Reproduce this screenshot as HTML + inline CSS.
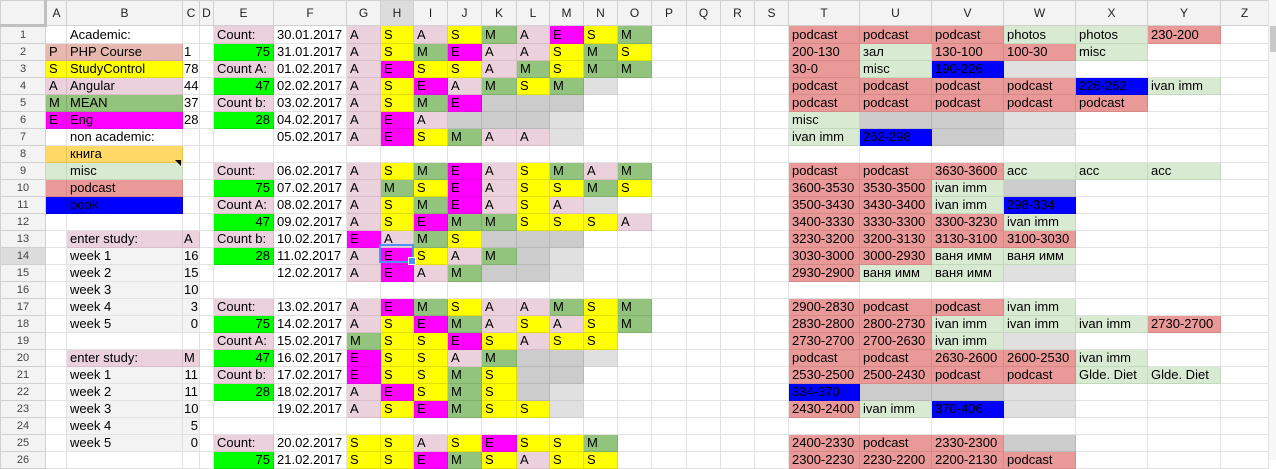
<!DOCTYPE html>
<html><head><meta charset="utf-8">
<style>
html,body{margin:0;padding:0;background:#fff;overflow:hidden;width:1276px;height:460px}
table{border-collapse:collapse;table-layout:fixed;width:1268px;font-family:"Liberation Sans",Arial,sans-serif;font-size:13px;color:#000;position:absolute;left:0;top:0}
td,th{border:1px solid #e2e2e2;padding:0 3px;height:16px;line-height:16px;white-space:nowrap;overflow:hidden;font-weight:normal;text-align:left}
td:nth-child(4){padding:0 1px}
thead th{height:23px;background:#f3f3f3;color:#222;text-align:center;border-color:#d0d0d0;font-size:12px;padding:0}
tbody th{background:#f3f3f3;color:#444;text-align:center;font-size:11px;border-color:#d0d0d0;padding:0}
thead th.c{border-right:3px solid #c0c0c0;border-bottom:3px solid #c0c0c0}
.n{text-align:right}
.p{background:#ead1dc;border-color:#d8bcc8}
.y{background:#ffff00;border-color:#e0e000}
.g{background:#93c47d;border-color:#80b06a}
.m{background:#ff00ff;border-color:#e000e0}
.G{background:#00ff00;border-color:#00dd00}
.r{background:#ea9999;border-color:#d88888}
.l{background:#d9ead3;border-color:#c4d8bd}
.b{background:#0000ff;border-color:#0000dd}
.o{background:#ffd966;border-color:#e8c255}
.s{background:#e6b8af;border-color:#d4a49b}
.k{background:#cccccc;border-color:#b8b8b8}
.e{background:#e0e0e0;border-color:#cfcfcf}
.f{background:#f3f3f3}
.sel{position:absolute;left:379px;top:244px;width:31px;height:15px;border:2px solid #4d90fe}
.hd{position:absolute;left:408px;top:257px;width:6px;height:6px;background:#4d90fe;border:1px solid #fff}
.sb{position:absolute;left:1268px;top:0;width:8px;height:460px;background:#f7f7f7;border-left:1px solid #e2e2e2}
.th{position:absolute;left:1270px;top:26px;width:6px;height:26px;background:#c8c8c8}
.tri{position:absolute;left:175px;top:160px;width:0;height:0;border-left:6px solid transparent;border-top:6px solid #000}
</style></head><body>
<table>
<colgroup><col style="width:45px"><col style="width:21px"><col style="width:116px"><col style="width:17px"><col style="width:14px"><col style="width:60px"><col style="width:73px"><col style="width:34px"><col style="width:33px"><col style="width:34px"><col style="width:34px"><col style="width:35px"><col style="width:33px"><col style="width:34px"><col style="width:34px"><col style="width:34px"><col style="width:35px"><col style="width:34px"><col style="width:34px"><col style="width:34px"><col style="width:71px"><col style="width:72px"><col style="width:72px"><col style="width:72px"><col style="width:72px"><col style="width:73px"><col style="width:48px"></colgroup>
<thead><tr><th class="c"></th><th>A</th><th>B</th><th>C</th><th>D</th><th>E</th><th>F</th><th>G</th><th style="background:#dcdcdc">H</th><th>I</th><th>J</th><th>K</th><th>L</th><th>M</th><th>N</th><th>O</th><th>P</th><th>Q</th><th>R</th><th>S</th><th>T</th><th>U</th><th>V</th><th>W</th><th>X</th><th>Y</th><th>Z</th></tr></thead>
<tbody>
<tr><th>1</th><td></td><td>Academic:</td><td></td><td></td><td class="p">Count:</td><td>30.01.2017</td><td class="p">A</td><td class="y">S</td><td class="p">A</td><td class="y">S</td><td class="g">M</td><td class="p">A</td><td class="m">E</td><td class="y">S</td><td class="g">M</td><td></td><td></td><td></td><td></td><td class="r">podcast</td><td class="r">podcast</td><td class="r">podcast</td><td class="l">photos</td><td class="l">photos</td><td class="r">230-200</td><td></td></tr>
<tr><th>2</th><td class="s">P</td><td class="s">PHP Course</td><td>1</td><td></td><td class="G n">75</td><td>31.01.2017</td><td class="p">A</td><td class="y">S</td><td class="g">M</td><td class="m">E</td><td class="p">A</td><td class="p">A</td><td class="y">S</td><td class="g">M</td><td class="y">S</td><td></td><td></td><td></td><td></td><td class="r">200-130</td><td class="l">зал</td><td class="r">130-100</td><td class="r">100-30</td><td class="l">misc</td><td></td><td></td></tr>
<tr><th>3</th><td class="y">S</td><td class="y">StudyControl</td><td>78</td><td></td><td class="p">Count A:</td><td>01.02.2017</td><td class="p">A</td><td class="m">E</td><td class="y">S</td><td class="y">S</td><td class="p">A</td><td class="g">M</td><td class="y">S</td><td class="g">M</td><td class="g">M</td><td></td><td></td><td></td><td></td><td class="r">30-0</td><td class="l">misc</td><td class="b">190-226</td><td class="e"></td><td></td><td></td><td></td></tr>
<tr><th>4</th><td class="p">A</td><td class="p">Angular</td><td>44</td><td></td><td class="G n">47</td><td>02.02.2017</td><td class="p">A</td><td class="y">S</td><td class="m">E</td><td class="p">A</td><td class="g">M</td><td class="y">S</td><td class="g">M</td><td class="e"></td><td></td><td></td><td></td><td></td><td></td><td class="r">podcast</td><td class="r">podcast</td><td class="r">podcast</td><td class="r">podcast</td><td class="b">226-262</td><td class="l">ivan imm</td><td></td></tr>
<tr><th>5</th><td class="g">M</td><td class="g">MEAN</td><td>37</td><td></td><td class="p">Count b:</td><td>03.02.2017</td><td class="p">A</td><td class="y">S</td><td class="g">M</td><td class="m">E</td><td class="k"></td><td class="k"></td><td class="k"></td><td></td><td></td><td></td><td></td><td></td><td></td><td class="r">podcast</td><td class="r">podcast</td><td class="r">podcast</td><td class="r">podcast</td><td class="r">podcast</td><td></td><td></td></tr>
<tr><th>6</th><td class="m">E</td><td class="m">Eng</td><td>28</td><td></td><td class="G n">28</td><td>04.02.2017</td><td class="p">A</td><td class="m">E</td><td class="p">A</td><td class="k"></td><td class="k"></td><td class="k"></td><td class="e"></td><td></td><td></td><td></td><td></td><td></td><td></td><td class="l">misc</td><td class="k"></td><td class="k"></td><td class="e"></td><td></td><td></td><td></td></tr>
<tr><th>7</th><td></td><td>non academic:</td><td></td><td></td><td></td><td>05.02.2017</td><td class="p">A</td><td class="m">E</td><td class="y">S</td><td class="g">M</td><td class="p">A</td><td class="p">A</td><td class="e"></td><td></td><td></td><td></td><td></td><td></td><td></td><td class="l">ivan imm</td><td class="b">262-298</td><td class="k"></td><td class="e"></td><td></td><td></td><td></td></tr>
<tr><th>8</th><td class="o"></td><td class="o">книга</td><td></td><td></td><td></td><td></td><td></td><td></td><td></td><td></td><td></td><td></td><td></td><td></td><td></td><td></td><td></td><td></td><td></td><td></td><td></td><td></td><td></td><td></td><td></td><td></td></tr>
<tr><th>9</th><td class="l"></td><td class="l">misc</td><td></td><td></td><td class="p">Count:</td><td>06.02.2017</td><td class="p">A</td><td class="y">S</td><td class="g">M</td><td class="m">E</td><td class="p">A</td><td class="y">S</td><td class="g">M</td><td class="p">A</td><td class="g">M</td><td></td><td></td><td></td><td></td><td class="r">podcast</td><td class="r">podcast</td><td class="r">3630-3600</td><td class="l">acc</td><td class="l">acc</td><td class="l">acc</td><td></td></tr>
<tr><th>10</th><td class="r"></td><td class="r">podcast</td><td></td><td></td><td class="G n">75</td><td>07.02.2017</td><td class="p">A</td><td class="g">M</td><td class="y">S</td><td class="m">E</td><td class="p">A</td><td class="y">S</td><td class="y">S</td><td class="g">M</td><td class="y">S</td><td></td><td></td><td></td><td></td><td class="r">3600-3530</td><td class="r">3530-3500</td><td class="l">ivan imm</td><td class="k"></td><td></td><td></td><td></td></tr>
<tr><th>11</th><td class="b"></td><td class="b">book</td><td></td><td></td><td class="p">Count A:</td><td>08.02.2017</td><td class="p">A</td><td class="y">S</td><td class="g">M</td><td class="m">E</td><td class="p">A</td><td class="y">S</td><td class="p">A</td><td class="e"></td><td></td><td></td><td></td><td></td><td></td><td class="r">3500-3430</td><td class="r">3430-3400</td><td class="l">ivan imm</td><td class="b">298-334</td><td></td><td></td><td></td></tr>
<tr><th>12</th><td></td><td></td><td></td><td></td><td class="G n">47</td><td>09.02.2017</td><td class="p">A</td><td class="y">S</td><td class="m">E</td><td class="g">M</td><td class="g">M</td><td class="y">S</td><td class="y">S</td><td class="y">S</td><td class="p">A</td><td></td><td></td><td></td><td></td><td class="r">3400-3330</td><td class="r">3330-3300</td><td class="r">3300-3230</td><td class="l">ivan imm</td><td></td><td></td><td></td></tr>
<tr><th>13</th><td></td><td class="p">enter study:</td><td class="p">A</td><td></td><td class="p">Count b:</td><td>10.02.2017</td><td class="m">E</td><td class="p">A</td><td class="g">M</td><td class="y">S</td><td class="k"></td><td class="k"></td><td class="k"></td><td></td><td></td><td></td><td></td><td></td><td></td><td class="r">3230-3200</td><td class="r">3200-3130</td><td class="r">3130-3100</td><td class="r">3100-3030</td><td></td><td></td><td></td></tr>
<tr><th style="background:#dcdcdc">14</th><td></td><td class="f">week 1</td><td class="f">16</td><td></td><td class="G n">28</td><td>11.02.2017</td><td class="p">A</td><td class="m">E</td><td class="y">S</td><td class="p">A</td><td class="g">M</td><td class="k"></td><td class="e"></td><td></td><td></td><td></td><td></td><td></td><td></td><td class="r">3030-3000</td><td class="r">3000-2930</td><td class="l">ваня имм</td><td class="l">ваня имм</td><td></td><td></td><td></td></tr>
<tr><th>15</th><td></td><td class="f">week 2</td><td class="f">15</td><td></td><td></td><td>12.02.2017</td><td class="p">A</td><td class="m">E</td><td class="p">A</td><td class="g">M</td><td class="k"></td><td class="k"></td><td class="e"></td><td></td><td></td><td></td><td></td><td></td><td></td><td class="r">2930-2900</td><td class="l">ваня имм</td><td class="l">ваня имм</td><td class="e"></td><td></td><td></td><td></td></tr>
<tr><th>16</th><td></td><td class="f">week 3</td><td class="f">10</td><td></td><td></td><td></td><td></td><td></td><td></td><td></td><td></td><td></td><td></td><td></td><td></td><td></td><td></td><td></td><td></td><td></td><td></td><td></td><td></td><td></td><td></td><td></td></tr>
<tr><th>17</th><td></td><td class="f">week 4</td><td class="f n">3</td><td></td><td class="p">Count:</td><td>13.02.2017</td><td class="p">A</td><td class="m">E</td><td class="g">M</td><td class="y">S</td><td class="p">A</td><td class="p">A</td><td class="g">M</td><td class="y">S</td><td class="g">M</td><td></td><td></td><td></td><td></td><td class="r">2900-2830</td><td class="r">podcast</td><td class="r">podcast</td><td class="l">ivan imm</td><td></td><td></td><td></td></tr>
<tr><th>18</th><td></td><td class="f">week 5</td><td class="f n">0</td><td></td><td class="G n">75</td><td>14.02.2017</td><td class="p">A</td><td class="y">S</td><td class="m">E</td><td class="g">M</td><td class="p">A</td><td class="y">S</td><td class="p">A</td><td class="y">S</td><td class="g">M</td><td></td><td></td><td></td><td></td><td class="r">2830-2800</td><td class="r">2800-2730</td><td class="l">ivan imm</td><td class="l">ivan imm</td><td class="l">ivan imm</td><td class="r">2730-2700</td><td></td></tr>
<tr><th>19</th><td></td><td></td><td></td><td></td><td class="p">Count A:</td><td>15.02.2017</td><td class="g">M</td><td class="y">S</td><td class="y">S</td><td class="m">E</td><td class="y">S</td><td class="p">A</td><td class="y">S</td><td class="y">S</td><td></td><td></td><td></td><td></td><td></td><td class="r">2730-2700</td><td class="r">2700-2630</td><td class="l">ivan imm</td><td class="e"></td><td></td><td></td><td></td></tr>
<tr><th>20</th><td></td><td class="p">enter study:</td><td class="p">M</td><td></td><td class="G n">47</td><td>16.02.2017</td><td class="m">E</td><td class="y">S</td><td class="y">S</td><td class="p">A</td><td class="g">M</td><td class="k"></td><td class="k"></td><td class="e"></td><td></td><td></td><td></td><td></td><td></td><td class="r">podcast</td><td class="r">podcast</td><td class="r">2630-2600</td><td class="r">2600-2530</td><td class="l">ivan imm</td><td></td><td></td></tr>
<tr><th>21</th><td></td><td class="f">week 1</td><td class="f n">11</td><td></td><td class="p">Count b:</td><td>17.02.2017</td><td class="m">E</td><td class="y">S</td><td class="y">S</td><td class="g">M</td><td class="y">S</td><td class="k"></td><td class="k"></td><td></td><td></td><td></td><td></td><td></td><td></td><td class="r">2530-2500</td><td class="r">2500-2430</td><td class="r">podcast</td><td class="r">podcast</td><td class="l">Glde. Diet</td><td class="l">Glde. Diet</td><td></td></tr>
<tr><th>22</th><td></td><td class="f">week 2</td><td class="f n">11</td><td></td><td class="G n">28</td><td>18.02.2017</td><td class="p">A</td><td class="m">E</td><td class="y">S</td><td class="g">M</td><td class="y">S</td><td class="k"></td><td class="e"></td><td></td><td></td><td></td><td></td><td></td><td></td><td class="b">334-370</td><td class="k"></td><td class="k"></td><td class="e"></td><td></td><td></td><td></td></tr>
<tr><th>23</th><td></td><td class="f">week 3</td><td class="f n">10</td><td></td><td></td><td>19.02.2017</td><td class="p">A</td><td class="y">S</td><td class="m">E</td><td class="g">M</td><td class="y">S</td><td class="y">S</td><td class="e"></td><td></td><td></td><td></td><td></td><td></td><td></td><td class="r">2430-2400</td><td class="l">ivan imm</td><td class="b">370-406</td><td class="e"></td><td></td><td></td><td></td></tr>
<tr><th>24</th><td></td><td class="f">week 4</td><td class="f n">5</td><td></td><td></td><td></td><td></td><td></td><td></td><td></td><td></td><td></td><td></td><td></td><td></td><td></td><td></td><td></td><td></td><td></td><td></td><td></td><td></td><td></td><td></td><td></td></tr>
<tr><th>25</th><td></td><td class="f">week 5</td><td class="f n">0</td><td></td><td class="p">Count:</td><td>20.02.2017</td><td class="y">S</td><td class="y">S</td><td class="p">A</td><td class="y">S</td><td class="m">E</td><td class="y">S</td><td class="y">S</td><td class="g">M</td><td></td><td></td><td></td><td></td><td></td><td class="r">2400-2330</td><td class="r">podcast</td><td class="r">2330-2300</td><td class="k"></td><td></td><td></td><td></td></tr>
<tr><th>26</th><td></td><td></td><td></td><td></td><td class="G n">75</td><td>21.02.2017</td><td class="y">S</td><td class="y">S</td><td class="m">E</td><td class="g">M</td><td class="y">S</td><td class="p">A</td><td class="y">S</td><td class="y">S</td><td></td><td></td><td></td><td></td><td></td><td class="r">2300-2230</td><td class="r">2230-2200</td><td class="r">2200-2130</td><td class="r">podcast</td><td></td><td></td><td></td></tr>
</tbody></table>
<div class="tri"></div>
<div class="sel"></div><div class="hd"></div>
<div class="sb"></div><div class="th"></div>
</body></html>
